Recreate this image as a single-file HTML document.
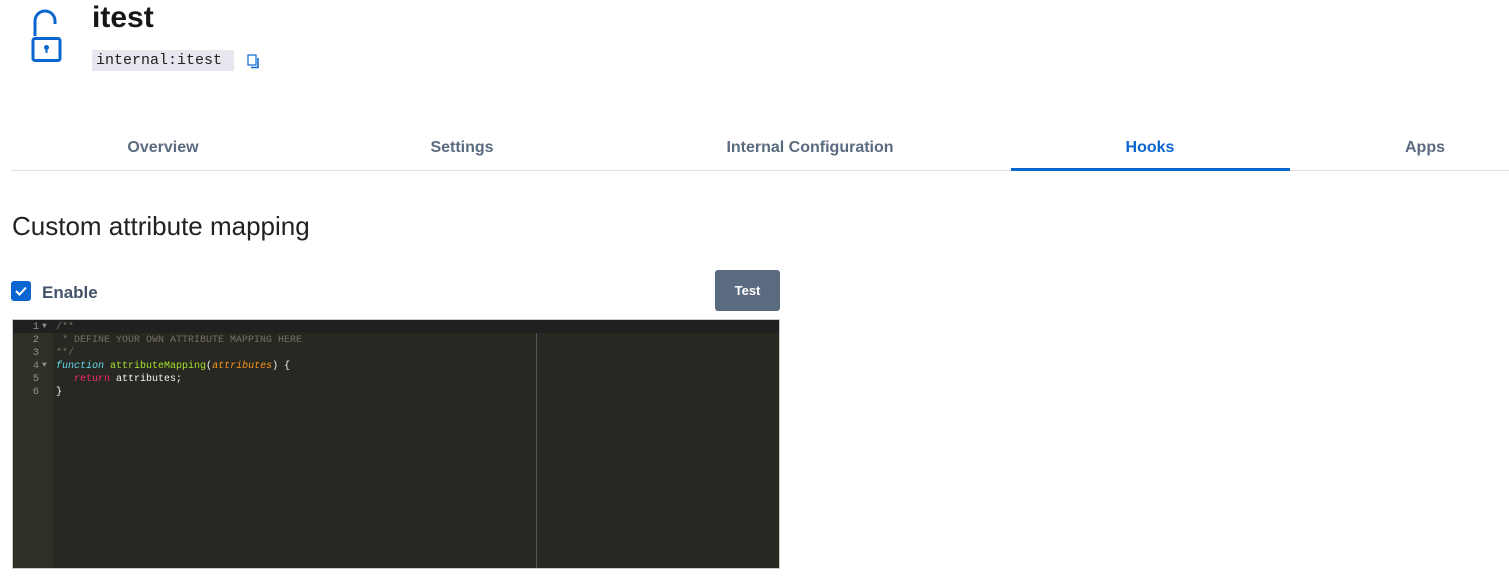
<!DOCTYPE html>
<html><head><meta charset="utf-8"><style>
*{margin:0;padding:0;box-sizing:border-box}
body{width:1509px;height:580px;background:#fff;font-family:"Liberation Sans",sans-serif;position:relative;overflow:hidden}
.abs{position:absolute}
.title{left:92px;top:0px;font-size:30px;font-weight:bold;color:#161616;line-height:36px}
.code{left:92px;top:50px;height:21px;width:142px;background:#e9e6f0;font-family:"Liberation Mono",monospace;font-size:15px;color:#222;line-height:21px;padding-left:4px}
.tab{top:139px;font-size:16px;font-weight:bold;color:#5a6b80;transform:translateX(-50%);white-space:nowrap}
.line{left:11px;top:170px;width:1498px;height:1px;background:#dde1e6}
.ul{left:1011px;top:168px;width:279px;height:3px;background:#0b66d0}
h2{position:absolute;left:12px;top:211px;font-size:26px;font-weight:normal;color:#222}
.cb{left:11px;top:281px;width:20px;height:20px;background:#0b66d0;border-radius:3px}
.en{left:42px;top:283px;font-size:17px;color:#44536a;font-weight:bold}
.btn{left:715px;top:270px;width:65px;height:41px;background:#5b6b7f;border-radius:3px;color:#fff;font-size:13px;font-weight:bold;text-align:center;line-height:42px}
.ed{left:12px;top:319px;width:768px;height:250px;background:#272822;border:1px solid #ccc}
.gut{left:1px;top:0;width:39px;height:248px;background:#2f3129}
.act{left:0;top:0;width:766px;height:13px;background:#202020}
.pm{left:523px;top:13px;width:1px;height:235px;background:#555}
.ln,.tx,.ar{font-family:"Liberation Mono",monospace;font-size:10.5px;line-height:13px;white-space:pre}
.ln{left:0;top:1px;width:26px;text-align:right;color:#8f908a}
.ar{left:29px;top:0;color:#8f908a;font-size:8px}
.tx{left:43px;top:1px;color:#f8f8f2;font-size:10px}
.c{color:#75715e}.k{color:#66d9ef;font-style:italic}.f{color:#a6e22e}.p{color:#fd971f;font-style:italic}.r{color:#f92672}
</style></head><body>
<svg class="abs" style="left:29px;top:9px" width="34" height="54" viewBox="0 0 34 54"><path d="M6 27V12a10 10 0 0 1 20 0v3" fill="none" stroke="#0b66d0" stroke-width="3"/><rect x="4" y="29.5" width="27" height="22" rx="2" fill="none" stroke="#0b66d0" stroke-width="3"/><circle cx="17.5" cy="38.5" r="2.5" fill="#0b66d0"/><rect x="16.5" y="38" width="2" height="6" fill="#0b66d0"/></svg>
<div class="abs title">itest</div>
<div class="abs code">internal:itest</div>
<svg class="abs" style="left:247px;top:54px" width="13" height="15" viewBox="0 0 13 15"><rect x="1" y="1" width="8" height="10" fill="none" stroke="#0b66d0" stroke-width="1.2"/><path d="M4 13.5h7V4" fill="none" stroke="#0b66d0" stroke-width="1.5"/></svg>
<div class="abs tab" style="left:163px">Overview</div>
<div class="abs tab" style="left:462px">Settings</div>
<div class="abs tab" style="left:810px">Internal Configuration</div>
<div class="abs tab" style="left:1150px;color:#0b66d0">Hooks</div>
<div class="abs tab" style="left:1425px">Apps</div>
<div class="abs line"></div><div class="abs ul"></div>
<h2>Custom attribute mapping</h2>
<div class="abs cb"><svg width="20" height="20" viewBox="0 0 20 20"><path d="M5 10l3.5 3.5L15 6.5" fill="none" stroke="#fff" stroke-width="2"/></svg></div>
<div class="abs en">Enable</div>
<div class="abs btn">Test</div>
<div class="abs ed">
<div class="abs gut"></div>
<div class="abs act"></div>
<div class="abs pm"></div>
<div class="abs ln">1
2
3
4
5
6</div>
<div class="abs ar">▼


▼</div>
<div class="abs tx"><span class="c">/**
 * DEFINE YOUR OWN ATTRIBUTE MAPPING HERE
**/</span>
<span class="k">function</span> <span class="f">attributeMapping</span>(<span class="p">attributes</span>) {
   <span class="r">return</span> attributes;
}</div>
</div>
</body></html>
